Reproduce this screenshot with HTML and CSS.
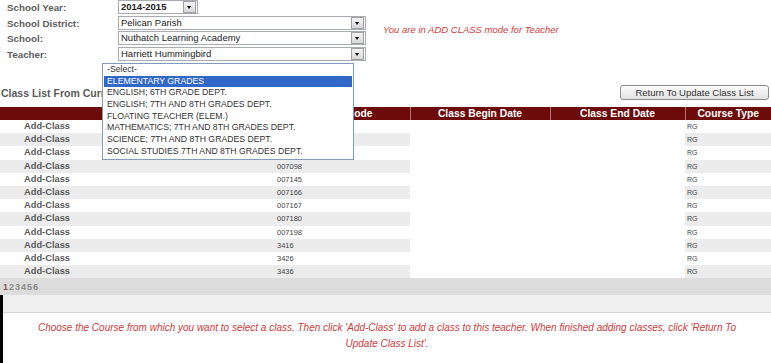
FILE: index.html
```html
<!DOCTYPE html>
<html>
<head>
<meta charset="utf-8">
<link rel="stylesheet" href="styles.css">
</head>
<body>
<div class="page">
  <div class="form">
    <div class="label">School Year:</div>
    <div class="field"><div class="select short"><span class="val bold">2014-2015</span><span class="arrow"></span></div></div>
    <div class="spacer"></div>

    <div class="label">School District:</div>
    <div class="field"><div class="select"><span class="val">Pelican Parish</span><span class="arrow"></span></div></div>
    <div class="msg">You are in ADD CLASS mode for Teacher</div>

    <div class="label">School:</div>
    <div class="field"><div class="select"><span class="val">Nuthatch Learning Academy</span><span class="arrow"></span></div></div>

    <div class="label">Teacher:</div>
    <div class="field"><div class="select"><span class="val">Harriett Hummingbird</span><span class="arrow"></span></div></div>
  </div>

  <ul class="dropdown">
    <li>-Select-</li>
    <li class="sel">ELEMENTARY GRADES</li>
    <li>ENGLISH; 6TH GRADE DEPT.</li>
    <li>ENGLISH; 7TH AND 8TH GRADES DEPT.</li>
    <li>FLOATING TEACHER (ELEM.)</li>
    <li>MATHEMATICS; 7TH AND 8TH GRADES DEPT.</li>
    <li>SCIENCE; 7TH AND 8TH GRADES DEPT.</li>
    <li>SOCIAL STUDIES 7TH AND 8TH GRADES DEPT.</li>
  </ul>

  <div class="toolbar">
    <div class="title">Class List From Current</div>
    <button class="btn">Return To Update Class List</button>
  </div>

  <table class="grid">
    <colgroup>
      <col class="c1"><col class="c2"><col class="c3"><col class="c4"><col class="c5">
    </colgroup>
    <thead>
      <tr><th></th><th class="codehead">Course Code</th><th class="sep">Class Begin Date</th><th class="sep">Class End Date</th><th class="sep">Course Type</th></tr>
    </thead>
    <tbody>
      <tr><td class="act">Add-Class</td><td class="code"></td><td class="date"></td><td class="date"></td><td class="type">RG</td></tr>
      <tr><td class="act">Add-Class</td><td class="code"></td><td class="date"></td><td class="date"></td><td class="type">RG</td></tr>
      <tr><td class="act">Add-Class</td><td class="code"></td><td class="date"></td><td class="date"></td><td class="type">RG</td></tr>
      <tr><td class="act">Add-Class</td><td class="code">007098</td><td class="date"></td><td class="date"></td><td class="type">RG</td></tr>
      <tr><td class="act">Add-Class</td><td class="code">007145</td><td class="date"></td><td class="date"></td><td class="type">RG</td></tr>
      <tr><td class="act">Add-Class</td><td class="code">007166</td><td class="date"></td><td class="date"></td><td class="type">RG</td></tr>
      <tr><td class="act">Add-Class</td><td class="code">007167</td><td class="date"></td><td class="date"></td><td class="type">RG</td></tr>
      <tr><td class="act">Add-Class</td><td class="code">007180</td><td class="date"></td><td class="date"></td><td class="type">RG</td></tr>
      <tr><td class="act">Add-Class</td><td class="code">007198</td><td class="date"></td><td class="date"></td><td class="type">RG</td></tr>
      <tr><td class="act">Add-Class</td><td class="code">3416</td><td class="date"></td><td class="date"></td><td class="type">RG</td></tr>
      <tr><td class="act">Add-Class</td><td class="code">3426</td><td class="date"></td><td class="date"></td><td class="type">RG</td></tr>
      <tr><td class="act">Add-Class</td><td class="code">3436</td><td class="date"></td><td class="date"></td><td class="type">RG</td></tr>
    </tbody>
    <tfoot>
      <tr><td colspan="5" class="pager"><span class="cur">1</span><span>2</span><span>3</span><span>4</span><span>5</span><span>6</span></td></tr>
    </tfoot>
  </table>

  <div class="bottom">
    <div class="band"></div>
    <p class="note">Choose the Course from which you want to select a class. Then click 'Add-Class' to add a class to this teacher. When finished adding classes, click 'Return To Update Class List'.</p>
  </div>
</div>
</body>
</html>
```

FILE: styles.css
```css
html, body {
  margin: 0;
  padding: 0;
  background: #fff;
}
body {
  font-family: "Liberation Sans", Arial, sans-serif;
  width: 771px;
  height: 363px;
  overflow: hidden;
}
.page {
  position: relative;
  width: 771px;
  height: 363px;
}

/* form */
.form {
  display: grid;
  grid-template-columns: 118px 248px 1fr;
  grid-auto-rows: 15.5px;
}
.label {
  grid-column: 1;
  padding-left: 7px;
  font-size: 9.8px;
  font-weight: bold;
  color: #5e5e5e;
  line-height: 13px;
  padding-top: 1px;
}
.field {
  grid-column: 2;
}
.spacer {
  grid-column: 3;
}
.select {
  height: 14px;
  box-sizing: border-box;
  border: 1px solid #a9adb3;
  background: #fff;
  display: flex;
  align-items: center;
  justify-content: space-between;
  padding-left: 2px;
}
.select.short {
  width: 80px;
}
.val {
  font-size: 9.5px;
  color: #222;
  line-height: 12px;
}
.val.bold {
  font-weight: bold;
}
.arrow {
  width: 11px;
  height: 10px;
  margin-right: 1px;
  border: 1px solid #a0a0a0;
  background: linear-gradient(#f4f4f4, #d8d8d8);
  position: relative;
}
.arrow::after {
  content: "";
  position: absolute;
  left: 3px;
  top: 4px;
  border-left: 2.5px solid transparent;
  border-right: 2.5px solid transparent;
  border-top: 3px solid #111;
}
.msg {
  grid-column: 3;
  grid-row: 2 / span 2;
  align-self: center;
  padding-left: 17px;
  padding-bottom: 3px;
  font-size: 9.5px;
  font-style: italic;
  color: #d63a3a;
}

/* dropdown list */
.dropdown {
  position: absolute;
  left: 102px;
  top: 63px;
  width: 250px;
  margin: 0;
  padding: 0 0 1px 0;
  list-style: none;
  background: #fff;
  border: 1px solid #7f9db9;
  z-index: 5;
}
.dropdown li {
  height: 11.7px;
  line-height: 11.7px;
  padding-left: 3px;
  margin: 0 1px;
  font-size: 8.7px;
  color: #333;
  white-space: nowrap;
}
.dropdown li.sel {
  background: #3168c8;
  color: #fff;
}

/* toolbar */
.toolbar {
  display: flex;
  justify-content: space-between;
  align-items: center;
  margin-top: 22px;
  height: 16px;
}
.title {
  padding-left: 1px;
  padding-top: 2px;
  font-size: 10.5px;
  font-weight: bold;
  color: #5a5a5a;
  white-space: nowrap;
}
.btn {
  width: 149px;
  height: 15px;
  margin-right: 2px;
  padding: 0;
  border: 1px solid #8c8c8c;
  border-radius: 3px;
  background: linear-gradient(#fbfbfb, #e2e2e2);
  font-family: "Liberation Sans", Arial, sans-serif;
  font-size: 9.5px;
  color: #333;
}

/* table */
.grid {
  margin-top: 7px;
  width: 771px;
  border-collapse: collapse;
  table-layout: fixed;
}
.c1 { width: 274px; }
.c2 { width: 136px; }
.c3 { width: 140px; }
.c4 { width: 135px; }
.c5 { width: 86px; }
.grid th {
  height: 13px;
  padding: 0;
  background: #6d0b0b;
  color: #fff;
  font-size: 10.3px;
  font-weight: bold;
  text-align: center;
  line-height: 13px;
}
.grid th.codehead {
  text-align: right;
  padding-right: 37px;
}
.grid th.sep {
  border-left: 1px solid #b07878;
}
.grid tbody td {
  height: 13.2px;
  padding: 0;
  line-height: 13px;
}
.grid tbody tr:nth-child(even) td {
  background: #ececec;
}
.grid tbody tr td.date {
  background: #fff;
}
.act {
  padding-left: 24px !important;
  font-size: 9.3px;
  font-weight: bold;
  color: #5a5a5a;
}
.code {
  padding-left: 3px !important;
  font-size: 7.5px;
  color: #444;
}
.type {
  padding-left: 2px !important;
  font-size: 7px;
  color: #444;
}
.pager {
  height: 17px;
  padding: 0 0 0 3px;
  background: #dcdcdc;
  font-size: 9px;
  font-weight: bold;
  color: #8a8a8a;
  letter-spacing: 1px;
}
.pager .cur {
  color: #8a5a5a;
}

/* bottom */
.bottom {
  border-left: 3px solid #000;
  height: 70px;
}
.band {
  height: 17px;
  background: #f0f0f0;
  border-bottom: 1px solid #d4d4d4;
}
.note {
  margin: 7px 32px 0 32px;
  text-align: center;
  font-size: 10px;
  font-style: italic;
  line-height: 15.5px;
  color: #cc3b3b;
}
```
